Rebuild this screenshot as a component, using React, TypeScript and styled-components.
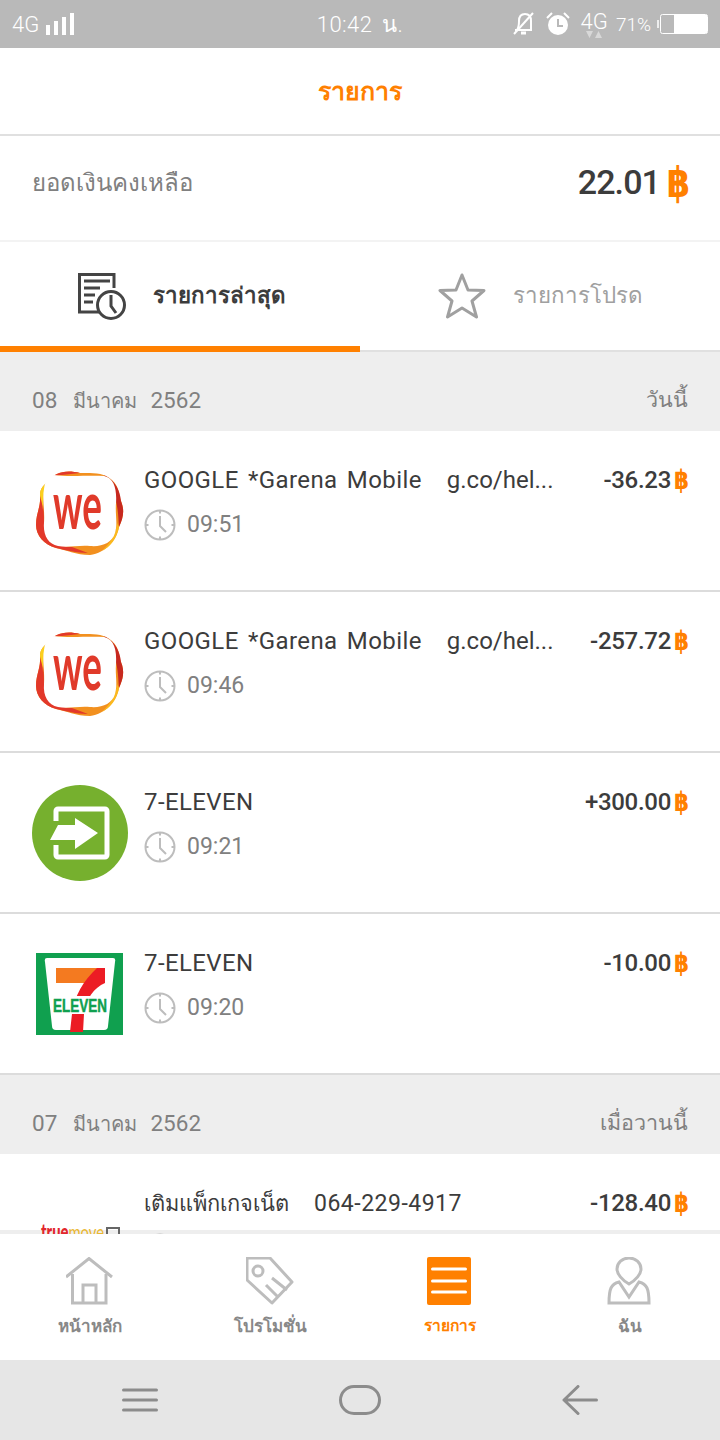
import React from "react";
import styled, { createGlobalStyle } from "styled-components";

const GlobalStyle = createGlobalStyle`
  html, body { margin: 0; padding: 0; background: #fff; }
  body { font-family: Roboto, "Noto Sans", "DejaVu Sans", sans-serif; }
`;

const Page = styled.div`
  width: 720px;
  height: 1440px;
  display: flex;
  flex-direction: column;
  overflow: hidden;
`;

const StatusBar = styled.div`
  height: 48px;
  flex: none;
  background: #b9b9b9;
  color: #fff;
  display: grid;
  grid-template-columns: 1fr auto 1fr;
  align-items: center;
  padding: 0 12px;
  font-size: 22px;
  font-weight: 300;
`;
const StatusSide = styled.div<{ $end?: boolean }>`
  display: flex;
  align-items: center;
  justify-content: ${({ $end }) => ($end ? "flex-end" : "flex-start")};
`;
const StatusTime = styled.div`
  letter-spacing: 0.4px;
  word-spacing: 4px;
`;
const NetLabel = styled.span`
  margin-right: 7px;
`;
const NetStack = styled.div`
  display: flex;
  flex-direction: column;
  align-items: center;
  line-height: 19px;
  margin-top: 2px;
`;
const AlarmIcon = styled.svg`
  margin: 0 11px 0 10px;
`;
const Percent = styled.span`
  font-size: 19px;
  margin: 0 5px 0 8px;
`;

const Header = styled.div`
  height: 86px;
  flex: none;
  display: flex;
  align-items: center;
  justify-content: center;
  color: #ff8000;
  font-size: 25px;
  font-weight: 700;
  border-bottom: 2px solid #e0e0e0;
`;

const Balance = styled.div`
  height: 106px;
  flex: none;
  display: flex;
  align-items: center;
  justify-content: space-between;
  padding: 0 32px 12px;
  box-sizing: border-box;
  border-bottom: 2px solid #f3f3f3;
`;
const BalanceLabel = styled.div`
  color: #808080;
  font-size: 24px;
`;
const BalanceValue = styled.div`
  color: #3c3c3c;
  font-size: 34px;
  font-weight: 500;
  display: flex;
  align-items: center;
  gap: 8px;
  letter-spacing: -0.9px;
`;
const Baht = styled.span<{ $big?: boolean }>`
  display: inline-flex;
  justify-content: center;
  width: ${({ $big }) => ($big ? "20px" : "13px")};
  color: #ff8000;
  font-weight: 700;
  font-size: ${({ $big }) => ($big ? "42px" : "27px")};
  transform: scaleX(0.8);
`;

const Tabs = styled.div`
  height: 110px;
  flex: none;
  display: grid;
  grid-template-columns: 1fr 1fr;
`;
const Tab = styled.div<{ $active?: boolean }>`
  display: flex;
  align-items: center;
  gap: 27px;
  padding: ${({ $active }) => ($active ? "4px" : "0")} 0 0 78px;
  font-size: 22.300px;
  font-weight: ${({ $active }) => ($active ? 700 : 400)};
  color: ${({ $active }) => ($active ? "#3c3c3c" : "#a0a0a0")};
  border-bottom: ${({ $active }) =>
    $active ? "6px solid #ff8000" : "2px solid #e0e0e0"};
`;
const TabLabel = styled.span`
  margin-bottom: 3px;
`;

const Content = styled.div`
  flex: 1;
  min-height: 0;
  overflow: hidden;
  background: #eeeeee;
`;
const DateBar = styled.div`
  height: 79px;
  box-sizing: border-box;
  padding: 31px 32px 0;
  display: flex;
  justify-content: space-between;
  background: #eeeeee;
  color: #808080;
  font-size: 22.500px;
  line-height: 34px;
  word-spacing: 10.500px;
`;
const Month = styled.span`
  font-size: 20px;
  margin-right: -3px;
`;
const DayLabel = styled.span`
  font-size: 21.500px;
`;
const Row = styled.div<{ $cut?: boolean }>`
  height: ${({ $cut }) => ($cut ? "76px" : "161px")};
  box-sizing: border-box;
  padding: 32px 32px 0;
  display: grid;
  grid-template-columns: 96px 1fr auto;
  column-gap: 16px;
  align-items: start;
  background: #fff;
  border-bottom: ${({ $cut }) => ($cut ? "none" : "2px solid #dcdcdc")};
`;
const Logo = styled.svg`
  display: block;
  width: 96px;
  height: 96px;
  overflow: visible;
`;
const RowText = styled.div`
  min-width: 0;
`;
const RowTitle = styled.div`
  color: #3c3c3c;
  font-size: 24px;
  line-height: 34px;
  letter-spacing: 0.4px;
  word-spacing: 3px;
  white-space: pre;
`;
const Merchant = styled.span<{ $thai?: boolean }>`
  margin-right: 25px;
  font-size: ${({ $thai }) => ($thai ? "21.800px" : "24px")};
  letter-spacing: ${({ $thai }) => ($thai ? "0" : "0.4px")};
`;
const Reference = styled.span<{ $phone?: boolean }>`
  font-size: ${({ $phone }) => ($phone ? "23px" : "24px")};
  letter-spacing: ${({ $phone }) => ($phone ? "0.5px" : "0")};
`;
const RowTime = styled.div`
  margin-top: 12px;
  display: flex;
  align-items: center;
  gap: 11px;
  color: #808080;
  font-size: 23px;
  line-height: 34px;
  height: 32px;
`;
const Amount = styled.div`
  display: flex;
  align-items: center;
  gap: 4px;
  color: #3c3c3c;
  font-size: 24px;
  font-weight: 500;
  line-height: 34px;
  letter-spacing: -0.3px;
`;

const BottomNav = styled.div`
  height: 126px;
  flex: none;
  display: grid;
  grid-template-columns: repeat(4, 1fr);
  background: #fff;
`;
const NavItem = styled.div<{ $active?: boolean }>`
  display: flex;
  flex-direction: column;
  align-items: center;
  padding-top: 23px;
  gap: 6px;
  font-size: ${({ $active }) => ($active ? "15.500px" : "17px")};
  font-weight: 700;
  line-height: 30px;
  color: ${({ $active }) => ($active ? "#ff8000" : "#888888")};
`;
const SystemNav = styled.div`
  height: 80px;
  flex: none;
  background: #e6e6e6;
  display: grid;
  grid-template-columns: 280px 160px 280px;
  align-items: center;
  justify-items: center;
`;

const ClockIcon = () => (
  <svg width="32" height="32" viewBox="0 0 32 32" fill="none" stroke="#bdbdbd" strokeWidth="2">
    <circle cx="16" cy="16" r="14.5" />
    <path d="M16 1.500v3M16 27.500v3M1.500 16h3M27.500 16h3" />
    <path d="M16 7v10l6 6" />
  </svg>
);

const WeLogo = () => (
  <Logo viewBox="0 0 96 96">
    <path d="M15 19C22 10 33 6 48 10C58 10 72 9 80 17C88 25 86 30 89 38C93 48 91 55 87 64C85 76 74 90 58 92C44 92 34 87 24 85C12 82 4 72 4 62C4 50 9 44 8 32C8 26 11 23 15 19Z" fill="#f2901f" />
    <path d="M15 19C22 10 33 6 48 10L30 12C24 12 20 14 18 16Z" fill="#e2382a" />
    <path d="M8 32C9 44 4 50 4 62C4 72 12 82 24 85C34 87 44 90 56 90L40 84C24 84 14 76 12 62C12 50 12 42 8 32Z" fill="#e2382a" />
    <path d="M15 19C11 23 8 26 8 32C9 38 11 42 11 48C11 36 11 26 18 15Z" fill="#fbcf1e" />
    <path d="M72 12C84 18 88 28 89 38C93 48 91 55 87 64C86 50 86 30 72 12Z" fill="#c7281f" />
    <path d="M87 64C85 76 78 84 70 88C78 80 84 72 85 60Z" fill="#fbb91e" />
    <path d="M22 12C36 14 58 12 72 13C82 15 85 26 84 40C83 52 86 60 83 70C80 80 70 84 58 83C46 82 36 85 26 83C16 81 11 72 12 60C13 48 10 36 12 26C13 18 16 13 22 12Z" fill="#fff" />
    <text x="21" y="66" fontFamily="Lato, sans-serif" fontSize="66" fontWeight="700" fill="#e03a2a" textLength="49" lengthAdjust="spacingAndGlyphs">we</text>
  </Logo>
);

const TopupLogo = () => (
  <Logo viewBox="0 0 96 96">
    <circle cx="48" cy="48" r="48" fill="#76b02e" />
    <path d="M24 36V26a2 2 0 0 1 2-2H73a2 2 0 0 1 2 2V70a2 2 0 0 1-2 2H26a2 2 0 0 1-2-2V60" fill="none" stroke="#fff" strokeWidth="5" />
    <path d="M18 55L26 40H43V33L66 48L43 64V55Z" fill="#fff" />
  </Logo>
);

const SevenLogo = () => (
  <Logo viewBox="0 0 96 96">
    <rect x="4" y="7" width="87" height="82" fill="#10a04f" />
    <path d="M15 12H81Q84 12 83 16L76 80Q76 84 72 84H24Q20 84 20 80L13 16Q12 12 15 12Z" fill="#fff" />
    <rect x="24" y="22" width="41" height="15" fill="#f47a20" />
    <path d="M73 22V37C62 42 54 52 52 68L51 86H38L40 68C42 50 52 34 65 22Z" fill="#ec1c24" />
    <rect x="19" y="50" width="58" height="18" fill="#fff" />
    <text x="21" y="66" fontFamily="'Liberation Sans', sans-serif" fontSize="19" fontWeight="700" fill="#10a04f" stroke="#10a04f" strokeWidth="0.5" textLength="54" lengthAdjust="spacingAndGlyphs">ELEVEN</text>
  </Logo>
);

const TrueLogo = () => (
  <Logo viewBox="0 0 96 96">
    <text x="9" y="54" fontFamily="Lato, sans-serif" fontSize="22" textLength="63" lengthAdjust="spacingAndGlyphs">
      <tspan fontWeight="900" fill="#e2262c">true</tspan>
      <tspan fill="#eab731">move</tspan>
    </text>
    <rect x="75" y="42" width="12" height="12" fill="none" stroke="#666" strokeWidth="2" />
  </Logo>
);

const logos = {
  we: <WeLogo />,
  topup: <TopupLogo />,
  seven: <SevenLogo />,
  truemove: <TrueLogo />,
};

type Item = {
  logo: keyof typeof logos;
  title: React.ReactNode;
  time: string;
  amount: string;
  cut?: boolean;
};

const garena = (
  <>
    <Merchant>GOOGLE *Garena Mobile</Merchant>
    <Reference>g.co/hel...</Reference>
  </>
);

const today: Item[] = [
  { logo: "we", title: garena, time: "09:51", amount: "-36.23" },
  { logo: "we", title: garena, time: "09:46", amount: "-257.72" },
  { logo: "topup", title: "7-ELEVEN", time: "09:21", amount: "+300.00" },
  { logo: "seven", title: "7-ELEVEN", time: "09:20", amount: "-10.00" },
];
const yesterday: Item[] = [
  {
    logo: "truemove",
    title: (
      <>
        <Merchant $thai>เติมแพ็กเกจเน็ต</Merchant>
        <Reference $phone>064-229-4917</Reference>
      </>
    ),
    time: "",
    amount: "-128.40",
    cut: true,
  },
];

const TxRow = ({ item }: { item: Item }) => (
  <Row $cut={item.cut}>
    {logos[item.logo]}
    <RowText>
      <RowTitle>{item.title}</RowTitle>
      <RowTime>
        <ClockIcon />
        {item.time}
      </RowTime>
    </RowText>
    <Amount>
      {item.amount}
      <Baht>฿</Baht>
    </Amount>
  </Row>
);

const HistoryIcon = () => (
  <svg width="48" height="48" viewBox="0 0 48 48" fill="none" stroke="#444" strokeWidth="3">
    <path d="M22 40H1.500V2.500H36V16" />
    <path d="M6 9H32M6 16H22M6 23H17M6 30H15" />
    <circle cx="33" cy="33" r="13.500" fill="#fff" />
    <path d="M33 23v11l5 7" />
  </svg>
);
const StarIcon = () => (
  <svg width="48" height="48" viewBox="0 0 48 48" fill="none" stroke="#a0a0a0" strokeWidth="3">
    <path d="M24 3L30 18L46 18.500L34 29L38.500 45L24 36L9.500 45L14 29L2 18.500L18 18Z" strokeLinejoin="round" />
  </svg>
);
const HomeIcon = () => (
  <svg width="48" height="48" viewBox="0 0 48 48" fill="none" stroke="#bdbdbd" strokeWidth="3">
    <path d="M0 20L23 1.500L46 20" />
    <path d="M6.500 17V46H40V17" />
    <path d="M17 46V28H30V46" />
  </svg>
);
const TagIcon = () => (
  <svg width="48" height="48" viewBox="0 0 48 48" fill="none" stroke="#bdbdbd" strokeWidth="3" strokeLinejoin="round">
    <path d="M1 1H24L46 25L26 46L1 23Z" />
    <circle cx="12" cy="14" r="5" />
    <path d="M26 21L41 33M20 28L32 40" />
  </svg>
);
const ListIcon = () => (
  <svg width="48" height="48" viewBox="0 0 48 48">
    <rect x="1" y="0" width="44" height="48" rx="2" fill="#ff8000" />
    <path d="M6.500 12H39.500M6.500 24H39.500M6.500 35H39.500" stroke="#fff" strokeWidth="3" strokeLinecap="round" />
  </svg>
);
const PersonIcon = () => (
  <svg width="48" height="48" viewBox="0 0 48 48" fill="none" stroke="#bdbdbd" strokeWidth="3">
    <path d="M23 27C16 23 11 17 11 12A12 11 0 0 1 35 12C35 17 30 23 23 27Z" />
    <path d="M13 25C5 27 3 32 3 46H43C43 32 41 27 33 25L23 40Z" />
  </svg>
);

const navItems = [
  { label: "หน้าหลัก", icon: <HomeIcon /> },
  { label: "โปรโมชั่น", icon: <TagIcon /> },
  { label: "รายการ", icon: <ListIcon />, active: true },
  { label: "ฉัน", icon: <PersonIcon /> },
];

export default function App() {
  return (
    <Page>
      <GlobalStyle />
      <StatusBar>
        <StatusSide>
          <NetLabel>4G</NetLabel>
          <svg width="28" height="22" viewBox="0 0 28 22" fill="#fff">
            <rect x="0" y="12" width="4" height="10" />
            <rect x="8" y="8" width="4" height="14" />
            <rect x="16" y="4" width="4" height="18" />
            <rect x="24" y="0" width="4" height="22" />
          </svg>
        </StatusSide>
        <StatusTime>10:42 น.</StatusTime>
        <StatusSide $end>
          <svg width="24" height="24" viewBox="0 0 24 24" fill="none" stroke="#fff" strokeWidth="2">
            <path d="M5 18C7 15 7 12 7 9C7 5 9 2 13 2C17 2 19 5 19 9V18H3" />
            <path d="M2 22L21 1" />
            <path d="M9 21H14" strokeWidth="3" />
          </svg>
          <AlarmIcon width="24" height="24" viewBox="0 0 24 24">
            <circle cx="12" cy="13" r="10" fill="#fff" />
            <path d="M1 6L6 1M23 6L18 1" stroke="#fff" strokeWidth="2" />
            <path d="M12 7V14H17" stroke="#b9b9b9" strokeWidth="2" fill="none" />
          </AlarmIcon>
          <NetStack>
            4G
            <svg width="18" height="7" viewBox="0 0 18 7" fill="#d8d8d8">
              <path d="M1 0H8L4.500 7ZM10 7H17L13.500 0Z" />
            </svg>
          </NetStack>
          <Percent>71%</Percent>
          <svg width="52" height="20" viewBox="0 0 52 20" fill="none">
            <path d="M2 6V14" stroke="#fff" strokeWidth="1.500" />
            <rect x="4.500" y="0.500" width="47" height="19" rx="2" stroke="#fff" />
            <rect x="18" y="1" width="33" height="18" fill="#fff" />
          </svg>
        </StatusSide>
      </StatusBar>
      <Header>รายการ</Header>
      <Balance>
        <BalanceLabel>ยอดเงินคงเหลือ</BalanceLabel>
        <BalanceValue>
          22.01
          <Baht $big>฿</Baht>
        </BalanceValue>
      </Balance>
      <Tabs>
        <Tab $active>
          <HistoryIcon />
          <TabLabel>รายการล่าสุด</TabLabel>
        </Tab>
        <Tab>
          <StarIcon />
          <TabLabel>รายการโปรด</TabLabel>
        </Tab>
      </Tabs>
      <Content>
        <DateBar>
          <span>
            08 <Month>มีนาคม</Month> 2562
          </span>
          <DayLabel>วันนี้</DayLabel>
        </DateBar>
        {today.map((item) => (
          <TxRow key={item.time} item={item} />
        ))}
        <DateBar>
          <span>
            07 <Month>มีนาคม</Month> 2562
          </span>
          <DayLabel>เมื่อวานนี้</DayLabel>
        </DateBar>
        {yesterday.map((item) => (
          <TxRow key={item.amount} item={item} />
        ))}
      </Content>
      <BottomNav>
        {navItems.map((item) => (
          <NavItem key={item.label} $active={item.active}>
            {item.icon}
            {item.label}
          </NavItem>
        ))}
      </BottomNav>
      <SystemNav>
        <svg width="36" height="24" viewBox="0 0 36 24" stroke="#8c8c8c" strokeWidth="3" strokeLinecap="round">
          <path d="M1.500 2H34.500M1.500 12H34.500M1.500 22H34.500" />
        </svg>
        <svg width="42" height="30" viewBox="0 0 42 30" fill="none" stroke="#8c8c8c" strokeWidth="3">
          <rect x="1.500" y="1.500" width="39" height="27" rx="13.500" />
        </svg>
        <svg width="36" height="30" viewBox="0 0 36 30" fill="none" stroke="#8c8c8c" strokeWidth="3" strokeLinecap="round" strokeLinejoin="round">
          <path d="M16 1.500L2 15L16 28.500M2 15H34.500" />
        </svg>
      </SystemNav>
    </Page>
  );
}
